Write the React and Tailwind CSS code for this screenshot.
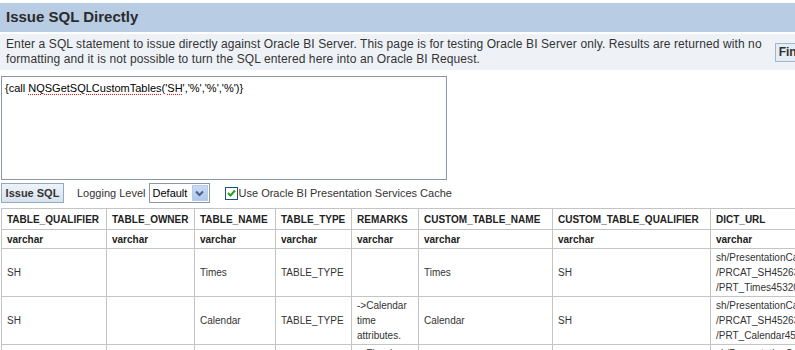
import React from "react";

const columns = [
  { name: "TABLE_QUALIFIER", w: "w-[105px]" },
  { name: "TABLE_OWNER", w: "w-[88px]" },
  { name: "TABLE_NAME", w: "w-[81px]" },
  { name: "TABLE_TYPE", w: "w-[76px]" },
  { name: "REMARKS", w: "w-[67px]" },
  { name: "CUSTOM_TABLE_NAME", w: "w-[134px]" },
  { name: "CUSTOM_TABLE_QUALIFIER", w: "w-[158px]" },
  { name: "DICT_URL", w: "w-[160px]" },
];

const rows = [
  {
    q: "SH",
    name: "Times",
    type: "TABLE_TYPE",
    remarks: [],
    custom: "Times",
    cq: "SH",
    url: ["sh/PresentationCatalog", "/PRCAT_SH45263_v1", "/PRT_Times45320"],
  },
  {
    q: "SH",
    name: "Calendar",
    type: "TABLE_TYPE",
    remarks: ["->Calendar", "time", "attributes."],
    custom: "Calendar",
    cq: "SH",
    url: ["sh/PresentationCatalog", "/PRCAT_SH45263_v1", "/PRT_Calendar45321"],
  },
  {
    q: "SH",
    name: "Fiscal",
    type: "TABLE_TYPE",
    remarks: ["->Fiscal", "time", "attributes."],
    custom: "Fiscal",
    cq: "SH",
    url: ["sh/PresentationCatalog", "/PRCAT_SH45263_v1", "/PRT_Fiscal45322"],
  },
];

const cell = "border border-[#c4c4c4] px-[5px] text-left";

const App = () => {
  return (
    <div className="w-[795px] h-[350px] overflow-hidden bg-white text-[#333] font-['Liberation_Sans',Arial,sans-serif]">
      {/* title bar */}
      <div className="mt-[3px] h-[29px] bg-[#b8cce4] flex items-center px-[6px]">
        <h1 className="text-[15px] font-bold text-[#2b2b2b]">Issue SQL Directly</h1>
      </div>

      {/* description */}
      <div className="mt-[2px] h-[36px] bg-[#eef2f7] flex items-center pl-[6px]">
        <p className="text-[12px] leading-[15px] tracking-[0.1px] whitespace-nowrap">
          Enter a SQL statement to issue directly against Oracle BI Server. This page is for testing Oracle BI Server only. Results are returned with no
          <br />
          formatting and it is not possible to turn the SQL entered here into an Oracle BI Request.
        </p>
        <button className="shrink-0 ml-[13px] h-[19px] px-[3px] border border-[#9eb6ce] bg-[#e4ecf5] text-[12px] font-bold text-[#333] leading-none">
          Find
        </button>
      </div>

      {/* sql box */}
      <div className="mt-[6px] ml-[1px] w-[446px] h-[104px] border border-[#8a98a6] px-[3px] pt-[3px] text-[11px] text-black">
        {"{call "}
        <span className="underline decoration-dotted decoration-[#e02020] underline-offset-2">NQSGetSQLCustomTables</span>
        {"('"}
        <span className="underline decoration-dotted decoration-[#e02020] underline-offset-2">SH</span>
        {"','%','%','%')}"}
      </div>

      {/* controls */}
      <div className="mt-[3px] ml-[1px] h-[20px] flex items-center text-[11px]">
        <button className="h-[20px] w-[63px] border border-[#93a9c0] bg-gradient-to-b from-[#eef3f8] to-[#d6e2ee] text-[11px] font-bold text-[#333]">
          Issue SQL
        </button>
        <span className="ml-[13px]">Logging Level</span>
        <div className="ml-[3px] h-[20px] w-[61px] border border-[#8a98a6] flex items-center justify-between pl-[3px] pr-[1px]">
          <span className="text-[11px] text-black">Default</span>
          <span className="h-[16px] w-[16px] bg-gradient-to-b from-[#c9daf4] to-[#aec7ee] border border-[#b7cbe9] flex items-center justify-center">
            <svg width="9" height="7" viewBox="0 0 9 7">
              <path d="M1 1.5 L4.5 5 L8 1.5" stroke="#4d6185" strokeWidth="2" fill="none" />
            </svg>
          </span>
        </div>
        <span className="ml-[15px] h-[13px] w-[13px] border border-[#1c5180] bg-white flex items-center justify-center">
          <svg width="9" height="8" viewBox="0 0 9 8">
            <path d="M1 4 L3.5 6.5 L8 1.5" stroke="#21a121" strokeWidth="2" fill="none" />
          </svg>
        </span>
        <span className="ml-px">Use Oracle BI Presentation Services Cache</span>
      </div>

      {/* results */}
      <table className="mt-[5px] ml-[1px] table-fixed border-collapse text-[10px] w-[869px]">
        <colgroup>
          {columns.map((c) => (
            <col key={c.name} className={c.w} />
          ))}
        </colgroup>
        <thead>
          <tr className="h-[21px]">
            {columns.map((c) => (
              <th key={c.name} className={`${cell} font-bold text-[#222] whitespace-nowrap`}>
                {c.name}
              </th>
            ))}
          </tr>
          <tr className="h-[19px]">
            {columns.map((c) => (
              <th key={c.name} className={`${cell} font-bold text-[#222]`}>
                varchar
              </th>
            ))}
          </tr>
        </thead>
        <tbody>
          {rows.map((r, i) => (
            <tr key={i} className="h-[48px]">
              <td className={cell}>{r.q}</td>
              <td className={cell}></td>
              <td className={cell}>{r.name}</td>
              <td className={cell}>{r.type}</td>
              <td className={`${cell} leading-[15px]`}>
                {r.remarks.map((l, j) => (
                  <div key={j}>{l}</div>
                ))}
              </td>
              <td className={cell}>{r.custom}</td>
              <td className={cell}>{r.cq}</td>
              <td className={`${cell} leading-[15px] whitespace-nowrap overflow-hidden`}>
                {r.url.map((l, j) => (
                  <div key={j}>{l}</div>
                ))}
              </td>
            </tr>
          ))}
        </tbody>
      </table>
    </div>
  );
};

export default App;
